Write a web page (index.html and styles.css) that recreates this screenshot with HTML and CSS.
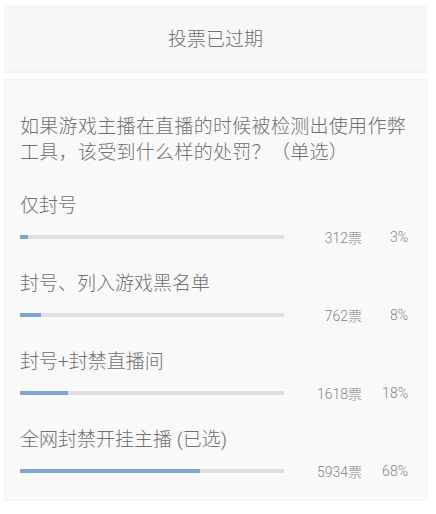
FILE: index.html
```html
<!DOCTYPE html>
<html lang="zh-CN">
<head>
    <meta charset="UTF-8">
    <meta name="viewport" content="width=device-width, initial-scale=1.0">
    <title>投票已过期</title>
    <link rel="stylesheet" href="styles.css">
</head>
<body>
    <div class="poll">
        <div class="poll-header">投票已过期</div>
        <div class="poll-body">
            <div class="question">如果游戏主播在直播的时候被检测出使用作弊工具，该受到什么样的处罚？（单选）</div>

            <div class="option">
                <div class="option-label">仅封号</div>
                <div class="option-stats">
                    <div class="bar"><div class="bar-fill" style="width: 3%;"></div></div>
                    <span class="count">312票</span>
                    <span class="percent">3%</span>
                </div>
            </div>

            <div class="option">
                <div class="option-label">封号、列入游戏黑名单</div>
                <div class="option-stats">
                    <div class="bar"><div class="bar-fill" style="width: 8%;"></div></div>
                    <span class="count">762票</span>
                    <span class="percent">8%</span>
                </div>
            </div>

            <div class="option">
                <div class="option-label">封号+封禁直播间</div>
                <div class="option-stats">
                    <div class="bar"><div class="bar-fill" style="width: 18%;"></div></div>
                    <span class="count">1618票</span>
                    <span class="percent">18%</span>
                </div>
            </div>

            <div class="option">
                <div class="option-label">全网封禁开挂主播 (已选)</div>
                <div class="option-stats">
                    <div class="bar"><div class="bar-fill" style="width: 68%;"></div></div>
                    <span class="count">5934票</span>
                    <span class="percent">68%</span>
                </div>
            </div>
        </div>
    </div>
</body>
</html>
```

FILE: styles.css
```css
body {
    margin: 0;
    background-color: #fff;
    font-family: Roboto, "Noto Sans CJK SC", sans-serif;
    font-weight: 300;
    color: #707070;
}
.poll {
    width: 423px;
    margin: 5px 0 0 4px;
}
.poll-header {
    height: 66px;
    line-height: 70px;
    text-align: center;
    font-size: 19px;
    background-color: #f7f7f7;
    border-bottom: 2px solid #f1f1f1;
    margin-bottom: 6px;
}
.poll-body {
    background-color: #f9f9f9;
    border: 1px solid #f1f1f1;
    padding: 34px 18px 19px 15px;
}
.question {
    font-size: 19px;
    line-height: 26px;
    letter-spacing: 0.3px;
    margin-bottom: 27px;
}
.option {
    margin-bottom: 24px;
}
.option:last-child {
    margin-bottom: 0;
}
.option-label {
    font-size: 19px;
    line-height: 26px;
    margin-bottom: 8px;
}
.option-stats {
    display: flex;
    align-items: center;
    height: 20px;
    font-size: 14px;
    color: #858585;
}
.bar {
    width: 264px;
    height: 4px;
    background-color: #e0e0e0;
}
.bar-fill {
    height: 100%;
    background-color: #7ea4cf;
}
.count {
    width: 78px;
    text-align: right;
}
.percent {
    width: 46px;
    text-align: right;
}
```
